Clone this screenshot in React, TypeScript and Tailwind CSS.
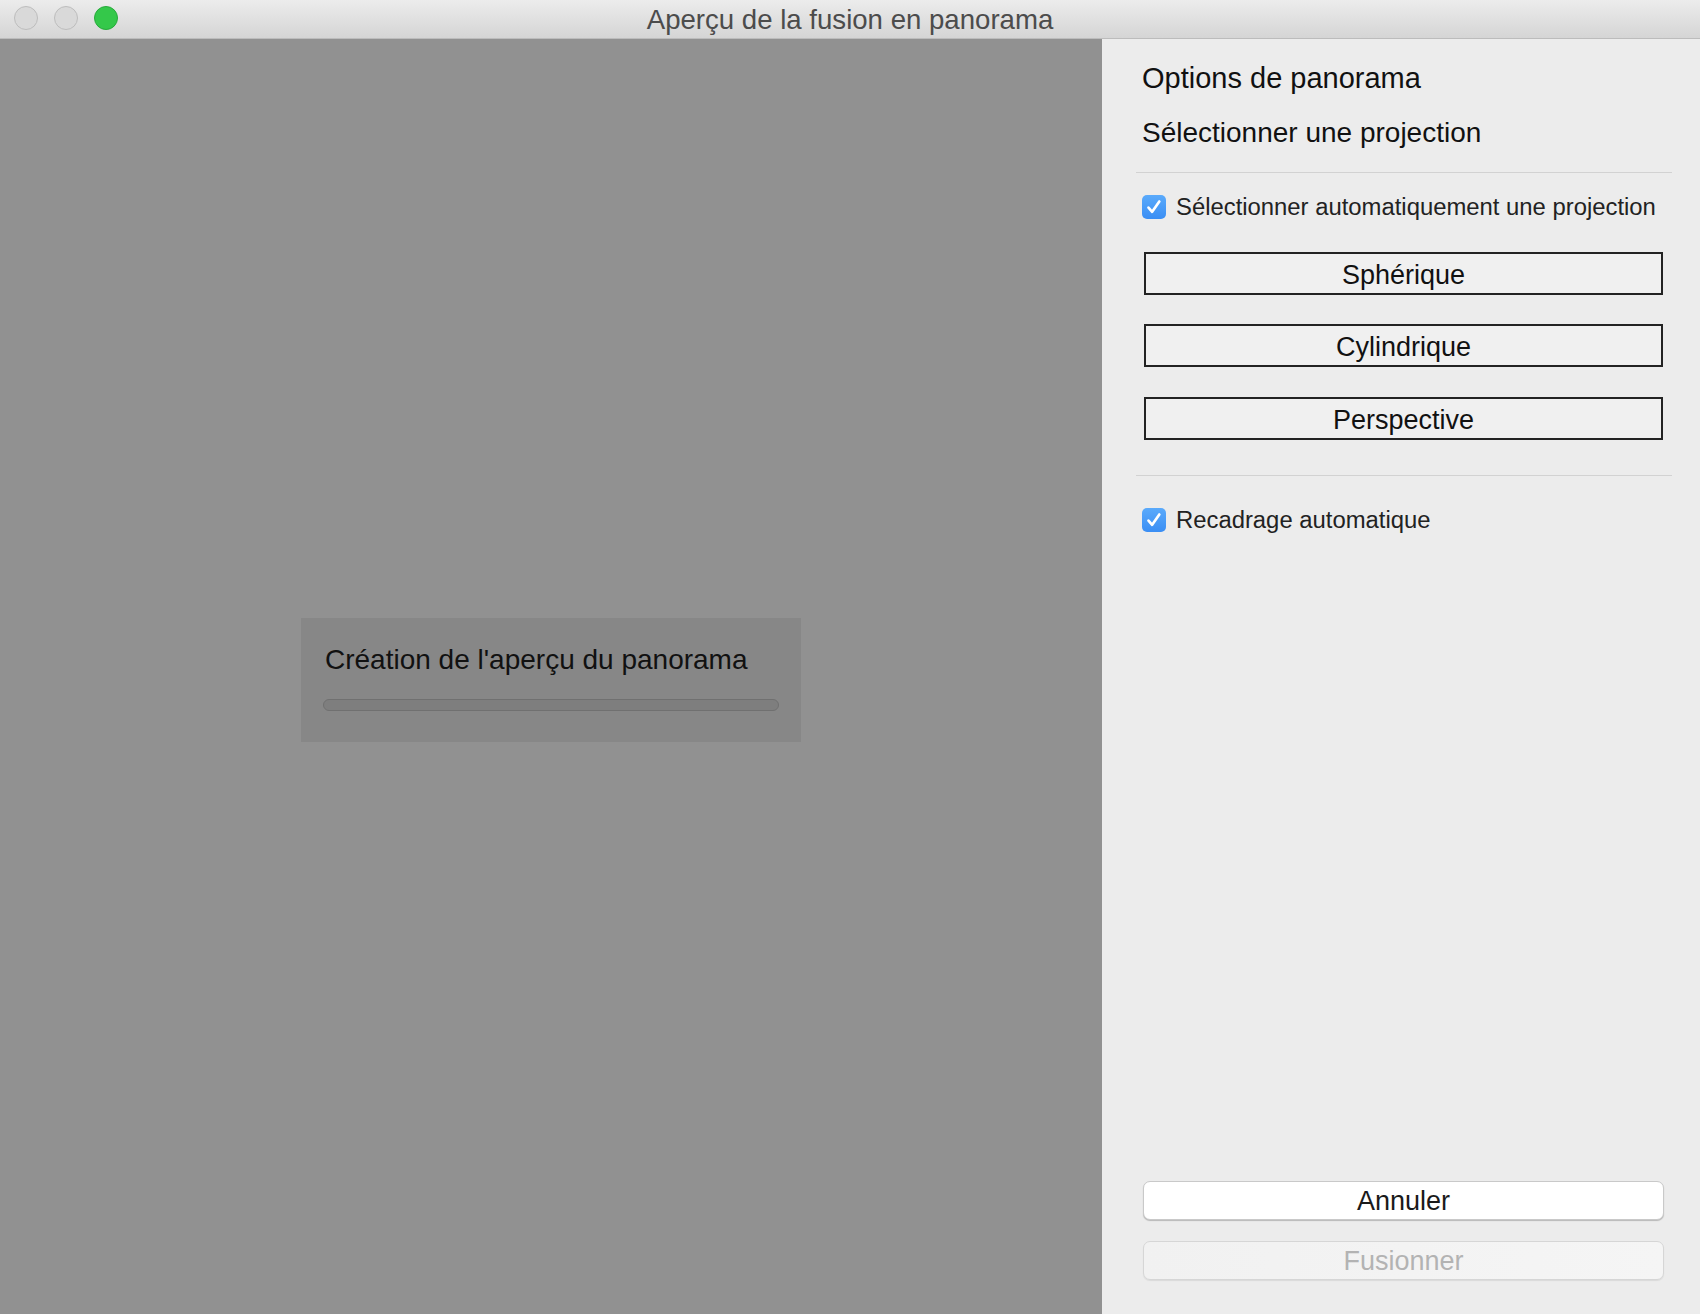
import type { ReactNode } from "react";

const FONT = { fontFamily: '"Liberation Sans", Arial, Helvetica, sans-serif' };

function CheckBox({ label }: { label: string }) {
  return (
    <label className="flex h-[24px] items-center">
      <span className="flex h-[24px] w-[24px] items-center justify-center rounded-[5px] bg-gradient-to-b from-[#5aaafb] to-[#3a8ef4]">
        <svg viewBox="0 0 24 24" className="h-[22px] w-[22px]" fill="none">
          <path
            d="M6 12.6l4 4.6L17.8 6"
            stroke="white"
            strokeWidth="2.9"
            strokeLinecap="round"
            strokeLinejoin="round"
          />
        </svg>
      </span>
      <span className="ml-[10px] text-[23.85px] leading-[24px] text-[#222]">{label}</span>
    </label>
  );
}

function ProjectionButton({ children, className = "" }: { children: ReactNode; className?: string }) {
  return (
    <button
      className={`ml-[42px] flex h-[43px] w-[519px] items-center justify-center border-2 border-[#232323] bg-[#f0f0f0] pt-[3px] text-[27px] leading-none text-[#111] ${className}`}
    >
      {children}
    </button>
  );
}

function TrafficLight({ color }: { color: "gray" | "green" }) {
  return (
    <span
      className={
        color === "green"
          ? "h-[24px] w-[24px] rounded-full border border-[#27aa3b] bg-[#34c84a]"
          : "h-[24px] w-[24px] rounded-full border border-[#bdbdbd] bg-[#d9d9d9]"
      }
    />
  );
}

export default function App() {
  return (
    <div className="flex h-[1314px] w-[1700px] flex-col overflow-hidden bg-[#ececec]" style={FONT}>
      {/* title bar */}
      <div className="relative flex h-[39px] shrink-0 items-center justify-center border-b border-[#bcbcbc] bg-gradient-to-b from-[#ececec] to-[#d5d5d5]">
        <div className="absolute left-[14px] top-[6px] flex gap-[16px]">
          <TrafficLight color="gray" />
          <TrafficLight color="gray" />
          <TrafficLight color="green" />
        </div>
        <span className="pt-[1px] text-[27.6px] leading-[38px] text-[#4c4c4c]">Aperçu de la fusion en panorama</span>
      </div>

      <div className="flex min-h-0 flex-1">
        {/* preview */}
        <div className="flex w-[1102px] shrink-0 items-center justify-center bg-[#919191] pt-[7px]">
          <div className="h-[124px] w-[500px] bg-[#878787] px-[22px] pt-[26px]">
            <div className="pl-[2px] text-[28px] leading-[32px] text-[#111]">Création de l'aperçu du panorama</div>
            <div className="mt-[23px] h-[12px] w-[456px] rounded-full border border-[#707070] bg-[#7e7e7e]" />
          </div>
        </div>

        {/* options */}
        <div className="flex flex-1 flex-col bg-[#ececec]">
          <h1 className="ml-[40px] mt-[22px] text-[29px] leading-[34px] text-[#111]">Options de panorama</h1>
          <h2 className="ml-[40px] mt-[22px] text-[28px] leading-[32px] text-[#111]">Sélectionner une projection</h2>

          <div className="ml-[34px] mt-[23px] h-px w-[536px] bg-[#d2d2d2]" />

          <div className="ml-[40px] mt-[22px]">
            <CheckBox label="Sélectionner automatiquement une projection" />
          </div>

          <ProjectionButton className="mt-[33px]">Sphérique</ProjectionButton>
          <ProjectionButton className="mt-[29px]">Cylindrique</ProjectionButton>
          <ProjectionButton className="mt-[30px]">Perspective</ProjectionButton>

          <div className="ml-[34px] mt-[35px] h-px w-[536px] bg-[#d2d2d2]" />

          <div className="ml-[40px] mt-[32px]">
            <CheckBox label="Recadrage automatique" />
          </div>

          <div className="flex-1" />

          <div className="mb-[34px] ml-[41px] flex w-[521px] flex-col gap-[21px]">
            <button className="flex h-[39px] items-center justify-center rounded-[7px] border border-[#c9c9c9] bg-white pt-[2px] text-[27px] leading-none text-[#1a1a1a] shadow-[0_1px_1px_rgba(0,0,0,0.22)]">
              Annuler
            </button>
            <button className="flex h-[39px] items-center justify-center rounded-[7px] border border-[#d6d6d6] bg-gradient-to-r from-[#f1f1f1] to-[#f5f5f5] pt-[2px] text-[27px] leading-none text-[#b3b3b3] shadow-[0_1px_1px_rgba(0,0,0,0.08)]">
              Fusionner
            </button>
          </div>
        </div>
      </div>
    </div>
  );
}
